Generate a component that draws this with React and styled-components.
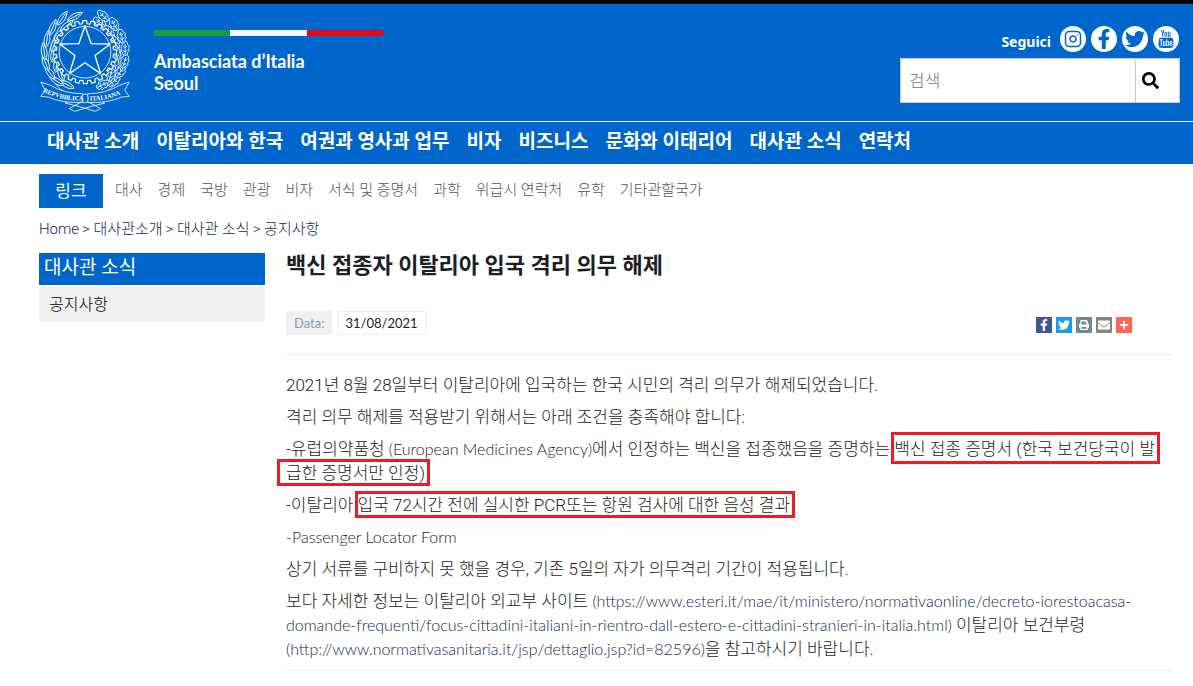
import React, { useState } from 'react';
import styled, { createGlobalStyle } from 'styled-components';
import { FaFacebookF, FaTwitter, FaSearch, FaPrint, FaPlus, FaEnvelope } from 'react-icons/fa';
import { TfiYoutube } from 'react-icons/tfi';
import { Instagram } from 'lucide-react';

const GlobalStyle = createGlobalStyle`
  * {
    box-sizing: border-box;
  }

  body {
    margin: 0;
    background: #ffffff;
    color: #222222;
    font-family: Roboto, 'Noto Sans CJK KR', sans-serif;
    font-size: 17px;
    font-weight: 300;
  }

  a {
    color: inherit;
    text-decoration: none;
  }

  ul, ol {
    list-style: none;
    margin: 0;
    padding: 0;
  }
`;

const Header = styled.header`
  border-top: 4px solid #000000;
  background: #0066cc;
  color: #ffffff;
`;

const HeaderTop = styled.div`
  display: flex;
  justify-content: space-between;
  align-items: flex-start;
  padding: 4px 13px 9px 39px;
`;

const Brand = styled.a`
  display: flex;
  align-items: flex-start;
  gap: 23px;
`;

const BrandText = styled.div`
  width: 229px;
  padding-top: 22px;
  font-family: Lato, sans-serif;
  font-size: 18px;
  font-weight: 700;
  line-height: 22px;
`;

const Flag = styled.div`
  display: flex;
  height: 6px;
  margin-bottom: 14px;
`;

const Stripe = styled.span`
  flex: 1;
  background: ${props => props.color};
`;

const Tools = styled.div`
  width: 280px;
  padding-top: 18px;
`;

const Social = styled.div`
  display: flex;
  justify-content: flex-end;
  align-items: center;
  gap: 5px;
  padding-right: 1px;
  margin-bottom: 6px;
`;

const SocialLabel = styled.span`
  margin-right: 4px;
  padding-top: 6px;
  font-family: 'Noto Sans', sans-serif;
  font-size: 14px;
  font-weight: 700;
  line-height: 20px;
`;

const SocialLink = styled.a`
  display: flex;
  align-items: center;
  justify-content: center;
  width: 26px;
  height: 26px;
  border-radius: 50%;
  background: #ffffff;
  color: #0066cc;
`;

const SearchForm = styled.form`
  display: flex;
  height: 45px;
  border: 1px solid #cccccc;
  background: #ffffff;
`;

const SearchInput = styled.input`
  flex: 1;
  min-width: 0;
  border: none;
  padding: 0 8px;
  font: inherit;
  color: #444444;

  &::placeholder {
    color: #777777;
  }
`;

const SearchButton = styled.button`
  display: flex;
  align-items: center;
  width: 44px;
  padding: 0 6px;
  border: none;
  border-left: 1px solid #cccccc;
  background: #ffffff;
  color: #000000;
  cursor: pointer;
`;

const MainNav = styled.nav`
  border-top: 1px solid #ffffff;
  padding: 6px 47px 8px;

  ul {
    display: flex;
    flex-wrap: wrap;
    column-gap: 17px;
  }

  a {
    font-size: 19px;
    font-weight: 700;
    line-height: 28px;
  }
`;

const Page = styled.div`
  padding: 10px 22px 0 39px;
`;

const QuickLinks = styled.nav`
  display: flex;
  align-items: center;
  gap: 12px;

  ul {
    display: flex;
    flex-wrap: wrap;
    gap: 15px;
    padding-bottom: 5px;
    font-size: 15px;
    color: #555555;
  }
`;

const QuickTitle = styled.span`
  width: 64px;
  background: #0066cc;
  color: #ffffff;
  font-weight: 400;
  line-height: 34px;
  text-align: center;
`;

const Breadcrumb = styled.nav`
  padding-top: 9px;
  font-family: Roboto, 'Noto Sans CJK KR', sans-serif;
  font-size: 15px;
  line-height: 24px;

  ol {
    display: flex;
    gap: 3px;
  }

  a {
    color: #13295a;
  }
`;

const Columns = styled.div`
  display: flex;
  align-items: flex-start;
  gap: 21px;
  padding-top: 12px;
`;

const Sidebar = styled.aside`
  flex: 0 0 226px;
`;

const SideTitle = styled.h2`
  margin: 0 0 2px;
  padding: 0 5px 2px;
  background: #0066cc;
  color: #ffffff;
  font-size: 19px;
  font-weight: 400;
  line-height: 30px;
`;

const SideLink = styled.a`
  display: block;
  padding: 0 10px;
  background: #f0f0f0;
  color: #000000;
  font-size: 16px;
  line-height: 35px;
`;

const Article = styled.main`
  flex: 1;
  min-width: 0;
`;

const Title = styled.h1`
  margin: 0;
  color: #1c2024;
  font-size: 22px;
  font-weight: 700;
  line-height: 26px;
`;

const Meta = styled.div`
  display: flex;
  justify-content: space-between;
  align-items: flex-start;
  padding: 32px 39px 19px 0;
  border-bottom: 1px solid #eeeeee;
`;

const DateGroup = styled.div`
  display: flex;
  gap: 5px;
  font-family: Lato, sans-serif;
  font-size: 13px;
  font-weight: 400;
  line-height: 22px;
`;

const DateLabel = styled.span`
  padding: 0 7px;
  border: 1px solid #f0f0f0;
  background: #f0f0f0;
  color: #8c9bb5;
`;

const DateValue = styled.time`
  padding: 0 7px;
  border: 1px solid #eeeeee;
  color: #1c2024;
`;

const Share = styled.div`
  display: flex;
  gap: 4px;
  padding-top: 6px;
`;

const ShareButton = styled.button`
  display: flex;
  align-items: center;
  justify-content: center;
  width: 16px;
  height: 16px;
  padding: 0;
  border: none;
  background: ${props => props.$bg};
  color: #ffffff;
  cursor: pointer;
`;

const Body = styled.div`
  padding: 18px 0 9px;
  border-bottom: 1px solid #eeeeee;
  line-height: 24px;

  p {
    margin: 0 0 8px;
  }

  p:last-child {
    margin-bottom: 0;
  }

  a {
    color: #13295a;
  }
`;

const Latin = styled.span`
  font-family: Lato, sans-serif;
  font-size: 16px;
  font-weight: 300;
`;

const Marked = styled.span`
  position: relative;
  white-space: nowrap;

  &::after {
    content: '';
    position: absolute;
    top: ${props => (props.$tall ? '-7px' : '-4px')};
    right: -5px;
    bottom: ${props => (props.$tall ? '-5px' : '-3px')};
    left: ${props => (props.$wide ? '-9px' : '-3px')};
    border: 3px solid #ed1c24;
    pointer-events: none;
  }
`;

const mainLinks = ['대사관 소개', '이탈리아와 한국', '여권과 영사과 업무', '비자', '비즈니스', '문화와 이태리어', '대사관 소식', '연락처'];
const quickLinks = ['대사', '경제', '국방', '관광', '비자', '서식 및 증명서', '과학', '위급시 연락처', '유학', '기타관할국가'];
const crumbs = ['Home', '대사관소개', '대사관 소식', '공지사항'];

const polar = (r, deg) => {
  const a = (deg * Math.PI) / 180;
  return [r * Math.sin(a), -r * Math.cos(a)];
};

const starPoints = (outer, inner) =>
  Array.from({ length: 10 }, (_, i) => polar(i % 2 ? inner : outer, i * 36).join(',')).join(' ');

// cog wheel outline with 24 teeth
const cogPoints = Array.from({ length: 24 }, (_, i) => {
  const a = i * 15;
  return [polar(93, a - 4), polar(93, a + 3), polar(84, a + 4), polar(84, a + 10)];
}).flat().map(p => p.join(',')).join(' ');

const laurel = [
  [-52, 96, -62], [-82, 86, -58], [-70, 64, -18], [-102, 62, -38], [-84, 38, 6], [-115, 34, -22],
  [-92, 8, 12], [-120, 0, -8], [-90, -22, 26], [-112, -36, 8], [-76, -50, 40], [-96, -70, 22],
  [-56, -76, 50], [-68, -98, 34], [-32, -104, 62],
];
const oak = [
  [52, 96, 62], [84, 86, 54], [76, 66, 16], [104, 58, 36], [88, 34, -8], [116, 28, 18],
  [92, 4, -18], [118, -10, 0], [88, -30, -28], [108, -46, -14], [70, -62, -44], [86, -82, -28],
  [44, -88, -58], [54, -106, -46],
];

function Emblem() {
  return (
    <svg width="92" height="104" viewBox="-135 -130 270 306" fill="none" stroke="#ffffff" strokeWidth="3" strokeLinejoin="round" role="img" aria-label="Repubblica Italiana">
      <path d="M-44 126C-118 94-128 6-72-78M44 126C118 94 128 6 70-78" strokeWidth="2" />
      {laurel.map(([x, y, r]) => (
        <path key={`${x},${y}`} transform={`translate(${x} ${y}) rotate(${r})`} fill="#0066cc" strokeWidth="2.6" d="M0 22C-12 8-10-10 0-28C10-10 12 8 0 22ZM0 16V-20" />
      ))}
      {oak.map(([x, y, r]) => (
        <path key={`${x},${y}`} transform={`translate(${x} ${y}) rotate(${r})`} fill="#0066cc" strokeWidth="2.4" d="M0 20Q-10 18-7 11Q-16 8-10 0Q-16-7-8-12Q-8-22 0-22Q8-22 8-12Q16-7 10 0Q16 8 7 11Q10 18 0 20ZM0 18V-14M-7 4L0 9L7 4M-6-8L0-3L6-8" />
      ))}
      <polygon points={cogPoints} fill="#0066cc" strokeWidth="3.4" />
      <circle r="76" strokeWidth="2.4" />
      <polygon points={starPoints(78, 31)} fill="#0066cc" strokeWidth="4" />
      <path d="M-58 150Q-20 158 30 174L46 166Q0 138-34 134ZM58 150Q20 158-30 174L-46 166Q0 138 34 134Z" fill="#0066cc" strokeWidth="2.4" />
      <path d="M-130 88L-100 98Q-62 122-8 122V148Q-70 150-108 132L-130 130L-117 112ZM130 88L100 98Q62 122 8 122V148Q70 150 108 132L130 130L117 112Z" fill="#0066cc" strokeWidth="2.4" />
      <ellipse cy="136" rx="9" ry="13" fill="#0066cc" strokeWidth="2.4" />
      <path id="ribbonLeft" d="M-124 116Q-68 145-2 142" stroke="none" />
      <path id="ribbonRight" d="M14 142Q68 144 126 114" stroke="none" />
      <g fill="#ffffff" stroke="none" fontFamily="Liberation Serif, serif" fontSize="19" fontWeight="700">
        <text><textPath href="#ribbonLeft">REPVBBLICA</textPath></text>
        <text><textPath href="#ribbonRight">ITALIANA</textPath></text>
      </g>
    </svg>
  );
}

const App = () => {
  const [query, setQuery] = useState('');

  return (
    <>
      <GlobalStyle />
      <Header>
        <HeaderTop>
          <Brand href="#">
            <Emblem />
            <BrandText>
              <Flag>
                <Stripe color="#169b45" />
                <Stripe color="#f7f7f7" />
                <Stripe color="#e30a17" />
              </Flag>
              Ambasciata d’Italia
              <br />
              Seoul
            </BrandText>
          </Brand>
          <Tools>
            <Social>
              <SocialLabel>Seguici</SocialLabel>
              <SocialLink href="#" aria-label="Instagram"><Instagram size={18} /></SocialLink>
              <SocialLink href="#" aria-label="Facebook"><FaFacebookF size={20} /></SocialLink>
              <SocialLink href="#" aria-label="Twitter"><FaTwitter size={20} /></SocialLink>
              <SocialLink href="#" aria-label="YouTube"><TfiYoutube size={18} /></SocialLink>
            </Social>
            <SearchForm onSubmit={e => e.preventDefault()}>
              <SearchInput aria-label="검색" placeholder="검색" value={query} onChange={e => setQuery(e.target.value)} />
              <SearchButton aria-label="검색"><FaSearch size={17} /></SearchButton>
            </SearchForm>
          </Tools>
        </HeaderTop>
        <MainNav>
          <ul>
            {mainLinks.map(item => <li key={item}><a href="#">{item}</a></li>)}
          </ul>
        </MainNav>
      </Header>

      <Page>
        <QuickLinks>
          <QuickTitle>링크</QuickTitle>
          <ul>
            {quickLinks.map(item => <li key={item}><a href="#">{item}</a></li>)}
          </ul>
        </QuickLinks>
        <Breadcrumb>
          <ol>
            {crumbs.map((item, i) => (
              <li key={item}>{i > 0 && '> '}<a href="#">{item}</a></li>
            ))}
          </ol>
        </Breadcrumb>

        <Columns>
          <Sidebar>
            <SideTitle>대사관 소식</SideTitle>
            <SideLink href="#">공지사항</SideLink>
          </Sidebar>
          <Article>
            <Title>백신 접종자 이탈리아 입국 격리 의무 해제</Title>
            <Meta>
              <DateGroup>
                <DateLabel>Data:</DateLabel>
                <DateValue dateTime="2021-08-31">31/08/2021</DateValue>
              </DateGroup>
              <Share>
                <ShareButton $bg="#3b5998" aria-label="Facebook"><FaFacebookF size={12} /></ShareButton>
                <ShareButton $bg="#1d9bf0" aria-label="Twitter"><FaTwitter size={12} /></ShareButton>
                <ShareButton $bg="#738a8d" aria-label="Print"><FaPrint size={10} /></ShareButton>
                <ShareButton $bg="#848484" aria-label="Email"><FaEnvelope size={12} /></ShareButton>
                <ShareButton $bg="#ff6550" aria-label="More"><FaPlus size={10} /></ShareButton>
              </Share>
            </Meta>
            <Body>
              <p>2021년 8월 28일부터 이탈리아에 입국하는 한국 시민의 격리 의무가 해제되었습니다.</p>
              <p>격리 의무 해제를 적용받기 위해서는 아래 조건을 충족해야 합니다:</p>
              <p>
                -유럽의약품청 <Latin>(European Medicines Agency)</Latin>에서 인정하는 백신을 접종했음을 증명하는 <Marked $tall>백신 접종 증명서 (한국 보건당국이 발</Marked>
                <br />
                <Marked $wide>급한 증명서만 인정)</Marked>
              </p>
              <p>-이탈리아 <Marked>입국 72시간 전에 실시한 PCR또는 항원 검사에 대한 음성 결과</Marked></p>
              <p><Latin>-Passenger Locator Form</Latin></p>
              <p>상기 서류를 구비하지 못 했을 경우, 기존 5일의 자가 의무격리 기간이 적용됩니다.</p>
              <p>
                보다 자세한 정보는 이탈리아 외교부 사이트 <Latin>(<a href="https://www.esteri.it/mae/it/ministero/normativaonline/decreto-iorestoacasa-domande-frequenti/focus-cittadini-italiani-in-rientro-dall-estero-e-cittadini-stranieri-in-italia.html">https://www.esteri.it/mae/it/ministero/normativaonline/decreto-iorestoacasa-<br />domande-frequenti/focus-cittadini-italiani-in-rientro-dall-estero-e-cittadini-stranieri-in-italia.html</a>)</Latin> 이탈리아 보건부령
                <br />
                <Latin>(<a href="http://www.normativasanitaria.it/jsp/dettaglio.jsp?id=82596">http://www.normativasanitaria.it/jsp/dettaglio.jsp?id=82596</a>)</Latin>을 참고하시기 바랍니다.
              </p>
            </Body>
          </Article>
        </Columns>
      </Page>
    </>
  );
};

export default App;
